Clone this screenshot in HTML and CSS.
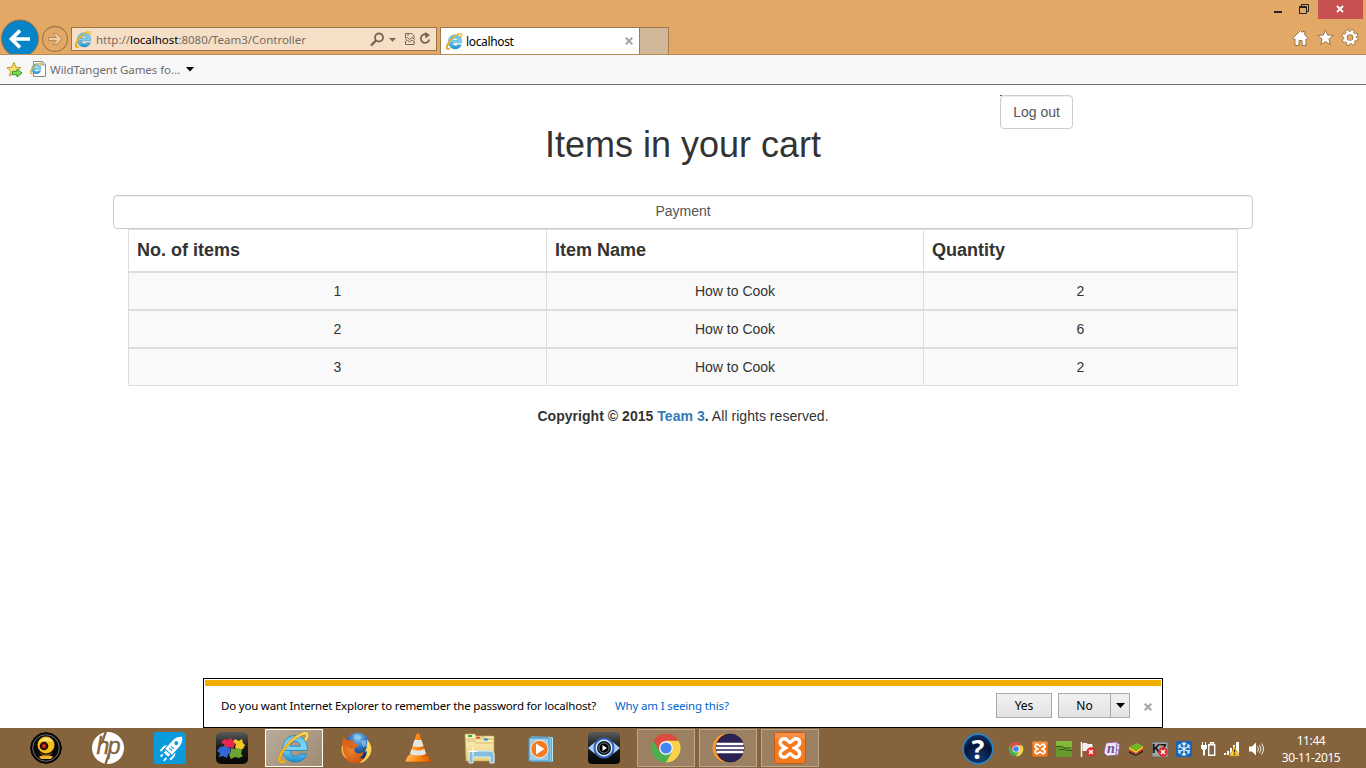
FILE: index.html
```html
<!DOCTYPE html>
<html lang="en">
<head>
<meta charset="utf-8">
<title>localhost</title>
<link rel="stylesheet" href="styles.css">
</head>
<body>
<svg class="defs" aria-hidden="true">
  <defs>
    <linearGradient id="ieBlue" x1="0" y1="0" x2="0" y2="1"><stop offset="0" stop-color="#64c8ed"/><stop offset=".5" stop-color="#7ed4f6"/><stop offset="1" stop-color="#168bcf"/></linearGradient>
    <linearGradient id="ieGold" x1="0" y1="0" x2="1" y2="0"><stop offset="0" stop-color="#f2b51c"/><stop offset="1" stop-color="#ffe06a"/></linearGradient>
    <linearGradient id="folder" x1="0" y1="0" x2="0" y2="1"><stop offset="0" stop-color="#fdf3bf"/><stop offset="1" stop-color="#e9cf7c"/></linearGradient>
    <linearGradient id="dark" x1="0" y1="0" x2="0" y2="1"><stop offset="0" stop-color="#5b5b5b"/><stop offset=".45" stop-color="#1c1c1c"/><stop offset="1" stop-color="#050505"/></linearGradient>
    <radialGradient id="help" cx=".5" cy=".8" r=".7"><stop offset="0" stop-color="#123a76"/><stop offset=".7" stop-color="#061437"/><stop offset="1" stop-color="#0a2b60"/></radialGradient>
    <radialGradient id="globe" cx=".5" cy=".2" r=".8"><stop offset="0" stop-color="#7fc4ef"/><stop offset=".5" stop-color="#2c6db5"/><stop offset="1" stop-color="#122a5c"/></radialGradient>
    <radialGradient id="fox" cx=".35" cy=".55" r=".7"><stop offset="0" stop-color="#ef8428"/><stop offset=".6" stop-color="#d25a17"/><stop offset="1" stop-color="#96300c"/></radialGradient>
    <linearGradient id="cone" x1="0" y1="0" x2="1" y2="0"><stop offset="0" stop-color="#ffb35a"/><stop offset=".5" stop-color="#ff8a10"/><stop offset="1" stop-color="#d65a00"/></linearGradient>
    <symbol id="ie" viewBox="0 0 32 32">
      <path d="M5 18.500H29.300C30.200 9.500 24.300 3.500 17.200 3.500S4.500 9 4.500 17s5.700 13 13 13c5.500 0 9.700-3 11.300-8H21.500c-1 1.600-2.200 2.200-4 2.200-3 0-5-2.200-5.200-5.700M12.300 14.200c.4-3 2.300-4.800 5-4.800s4.600 1.800 4.900 4.800Z" fill="url(#ieBlue)" stroke="#1680bd" stroke-width=".8" fill-rule="evenodd"/>
      <path d="M27.300 8.500C30.800 2.300 29.600-.3 24 2 16 5.300 7 13.500 3 22c-3 6.400-1.600 9.500 4 7.300" fill="none" stroke="#c68a12" stroke-width="3"/>
      <path d="M27.300 8.500C30.800 2.300 29.600-.3 24 2 16 5.300 7 13.500 3 22c-3 6.400-1.600 9.500 4 7.300" fill="none" stroke="url(#ieGold)" stroke-width="2.200"/>
    </symbol>
    <symbol id="chrome" viewBox="0 0 32 32">
      <circle cx="16" cy="16" r="14.500" fill="#4caf50"/>
      <path d="M3.440 8.750A14.500 14.500 0 0 1 28.560 8.750H16L9.700 19.600Z" fill="#dd4b3e"/>
      <path d="M28.560 8.750A14.500 14.500 0 0 1 16 30.500L22.300 19.600 16 8.750Z" fill="#fdd04a"/>
      <circle cx="16" cy="16" r="7" fill="#f4f4f4"/><circle cx="16" cy="16" r="5.600" fill="#4285f0"/>
    </symbol>
    <symbol id="xampp" viewBox="0 0 32 32">
      <rect x=".5" y=".5" width="31" height="31" rx="3" fill="#f47a20" stroke="#c65a12"/>
      <path d="M1 1h30v6H1Z" fill="#f8a36a" opacity=".5"/>
      <path d="m10 10.500 12 11m0-11-12 11" stroke="#fff" stroke-width="11" stroke-linecap="round"/>
      <path d="m10 10.500 3.500 2.500q2.500 2 5 0l3.500-2.500M10 21.500l3.500-2.500q2.500-2 5 0l3.500 2.500M16 14v4" fill="none" stroke="#f47a20" stroke-width="4" stroke-linecap="round"/>
    </symbol>
    <symbol id="error" viewBox="0 0 10 10"><circle cx="5" cy="5" r="4.700" fill="#e02c2c"/><path d="m3 3 4 4m0-4-4 4" stroke="#fff" stroke-width="1.500"/></symbol>
  </defs>
</svg>

<div class="desktop">
  <header class="chrome">
    <div class="caption">
      <span class="cap-btn"><svg width="9" height="19"><path d="M0 11h8v2H0Z" fill="#222"/></svg></span>
      <span class="cap-btn restore"><svg width="12" height="19"><path d="M1.500 6.500h7v7h-7ZM1 7.500h8M3.500 6V4.500h7v7H9" fill="none" stroke="#222"/></svg></span>
      <span class="cap-close"><svg width="9" height="9"><path d="m1 1 6 6m0-6-6 6" stroke="#fff" stroke-width="1.800"/></svg></span>
    </div>
    <div class="navbar">
      <svg class="history" width="71" height="35" viewBox="0 19 71 35">
        <circle cx="20" cy="38.500" r="18.500" fill="#0684c8" stroke="#9a6d3c"/>
        <path d="M30 39H12m8-8.500L11.500 39l8.500 8.500" fill="none" stroke="#fff" stroke-width="3.700"/>
        <circle cx="55" cy="39" r="12.500" fill="none" stroke="#a87c49" stroke-width="1.300"/>
        <path d="M48.500 37.500h8l-3.500-4h3.200l5.600 5.500-5.600 5.500H53l3.500-4h-8Z" fill="#f0cfa5" stroke="#a87c49" stroke-width=".8"/>
      </svg>
      <div class="address">
        <svg width="17" height="17"><use href="#ie"/></svg>
        <span class="url">http://<b>localhost</b>:8080/Team3/Controller</span>
        <svg class="addr-tools" width="64" height="18" viewBox="0 0 64 18">
          <circle cx="9" cy="7.500" r="4" fill="none" stroke="#77664f" stroke-width="1.800"/><path d="m6 10.500-5 5" stroke="#77664f" stroke-width="2.400"/>
          <path d="M19 8h7l-3.500 3.800Z" fill="#77664f"/>
          <path d="M35.500 8V3.500h6l2.500 2V8M35.500 12v2.500H44V12" fill="none" stroke="#77664f"/><path d="m35 9.500 2.500-2 2 2 2.500-2 3 2M35 12l2.500-2 2 2 2.500-2 3 2M37 5h2" fill="none" stroke="#77664f"/>
          <path d="M57.500 5a4.300 4.300 0 1 0 1.800 4.500" fill="none" stroke="#77664f" stroke-width="1.800"/><path d="m55 2 5 3-4.500 3.500Z" fill="#77664f"/>
        </svg>
      </div>
      <div class="tab">
        <svg width="17" height="17"><use href="#ie"/></svg>
        <span class="tab-name">localhost</span>
        <svg width="8" height="8"><path d="m.7.700 6.600 6.600m0-6.600L.7 7.300" stroke="#a5a5a5" stroke-width="2"/></svg>
      </div>
      <div class="new-tab"></div>
      <svg class="tools" width="68" height="20" viewBox="0 0 68 20">
        <g fill="#fff" stroke="#9b744a" stroke-width="1">
          <path d="M.5 10.500 8.500 2.500l2 2V3.500h2.300V7l3.700 3.500-1.500 1-1-.7V17.500h-4V12.500H7v5H3v-6.700l-1 .7Z"/>
          <path d="m33.500 1.800 2.100 5.200 5.900.4-4.600 3.700 1.500 5.600-4.900-3.100-4.900 3.100 1.500-5.600-4.600-3.700 5.900-.4Z"/>
        </g>
        <circle cx="58" cy="9.500" r="6.200" fill="none" stroke="#9b744a" stroke-width="4.500" stroke-dasharray="2.900 1.970"/>
        <circle cx="58" cy="9.500" r="4.600" fill="none" stroke="#9b744a" stroke-width="4.200"/>
        <circle cx="58" cy="9.500" r="6.200" fill="none" stroke="#fff" stroke-width="2.800" stroke-dasharray="2.200 2.670" stroke-dashoffset="-.35"/>
        <circle cx="58" cy="9.500" r="4.600" fill="none" stroke="#fff" stroke-width="2.600"/>
      </svg>
    </div>
    <div class="favorites">
      <svg width="18" height="18" viewBox="0 0 18 18"><path d="m8 1.500 1.900 4.700 5.100.4-3.800 3.300 1 5L8 12.300 3.500 15l1.100-5L.8 6.600l5.200-.4Z" fill="#fbe06e" stroke="#c5952b"/><path d="M6.500 10.300H11V8l5 4-5 4v-2.300H6.500Z" fill="#79d957" stroke="#2f9a35"/></svg>
      <svg class="fav-page" width="17" height="17" viewBox="0 0 17 17"><path d="M3.500.5h9l3 3v12h-12ZM12 1v3h3.500" fill="#fff" stroke="#8a8a8a"/><svg x="0" y="1.500" width="12" height="12"><use href="#ie"/></svg></svg>
      <span class="fav-name">WildTangent Games fo...</span>
      <svg width="8" height="5"><path d="M0 0h8L4 4.500Z" fill="#000"/></svg>
    </div>
  </header>

  <main class="page">
    <div class="top"><button class="btn logout">Log out</button></div>
    <h1 class="title">Items in your cart</h1>
    <button class="btn payment">Payment</button>
    <div class="cart">
      <div class="row head"><span>No. of items</span><span>Item Name</span><span>Quantity</span></div>
      <div class="row"><span>1</span><span>How to Cook</span><span>2</span></div>
      <div class="row"><span>2</span><span>How to Cook</span><span>6</span></div>
      <div class="row"><span>3</span><span>How to Cook</span><span>2</span></div>
    </div>
    <p class="copyright"><b>Copyright © 2015 <a>Team 3</a>.</b> All rights reserved.</p>
    <div class="notice">
      <div class="stripe"></div>
      <div class="notice-body">
        <span class="question">Do you want Internet Explorer to remember the password for localhost?</span>
        <a class="why">Why am I seeing this?</a>
        <span class="choice yes">Yes</span>
        <span class="choice no"><span class="no-label">No</span><span class="drop"><svg width="9" height="5"><path d="M0 0h9L4.500 5Z"/></svg></span></span>
        <svg class="dismiss" width="8" height="8"><path d="m.7.700 6.600 6.600m0-6.600L.7 7.300" stroke="#a5a5a5" stroke-width="2"/></svg>
      </div>
    </div>
  </main>

  <footer class="taskbar">
    <div class="apps">
      <span class="app"><svg viewBox="0 0 32 32"><circle cx="16" cy="16" r="15.300" fill="#090909" stroke="#000"/><circle cx="16" cy="16" r="13.300" fill="none" stroke="#888" stroke-width=".8"/><path d="M9 24.500q7-3 14 0l-2 2.500H11Z" fill="#f1b52a"/><circle cx="16" cy="13" r="8.500" fill="#f6bd1d"/><path d="M9 10q7-8 14 0-7-3-14 0" fill="#ffe98a"/><circle cx="14" cy="14" r="4.300" fill="#2a1010"/><circle cx="14" cy="14" r="2" fill="#e42a16"/><path d="M10 21q6 4 12 0" fill="none" stroke="#7a4a08" stroke-width="1.500"/></svg></span>
      <span class="app"><svg viewBox="0 0 32 32"><circle cx="16" cy="16" r="16" fill="#fff"/><path d="M13.800 0 9.800 11M17 22 13.500 32" stroke="#84633d" stroke-width="2.300"/><text x="4.500" y="22" class="hp">hp</text></svg></span>
      <span class="app"><svg viewBox="0 0 32 32"><path d="M0 0h29l3 3v29H0Z" fill="#0b9bdd"/><g transform="translate(2 0) rotate(42 16 16)" fill="#fff"><path d="M16 1c-3.500 3-4.500 6-4.500 9v11h9V10c0-3-1-6-4.500-9Z"/><path d="M10.500 17 8.500 20v6h2v-3M21.500 17l2 3v6h-2v-3M13 22h6v3h-6ZM12.500 27h1.800v3h-1.800ZM17.500 27h1.800v4h-1.800Z"/><circle cx="16" cy="9.500" r="2" fill="#0b9bdd"/><path d="M14 15.500h4M14 18h4" stroke="#0b9bdd" stroke-width="1.100"/></g></svg></span>
      <span class="app"><svg viewBox="0 0 32 32"><rect width="32" height="32" rx="5" fill="url(#dark)"/><path d="M8 7l4 1 2-2 3 2 2 4-2 4-5-1-3 1-1-4-3-1Z" fill="#e62851"/><path d="m19 7 4 2 3-2 1 4 2 2-2 4-4 1-4-2 1-4-3-2Z" fill="#f3c525"/><path d="m4 15 4-1 3 1 3 1 1 5-3 1-1 4-4-2-4 1 1-4-3-2Z" fill="#3367d2"/><path d="m15 16 4 1 3-1 4 2-1 4 2 2-4 2-4-1-4 2-2-4 2-3Z" fill="#6ba62f"/></svg></span>
      <span class="app active"><svg viewBox="0 0 32 32"><use href="#ie"/></svg></span>
      <span class="app"><svg viewBox="0 0 32 32"><circle cx="16" cy="16.500" r="15" fill="url(#fox)"/><path d="M6 8Q10 .5 18 .8q10 .5 12 12 0 8-4 12-3 3-6 1 4-3 3-6-3 3-7 1-3-2-1-5l4-2q-3-3-6-3Q9 8 6 8Z" fill="url(#globe)"/><path d="M14 3q5-1 8 2l-3 3-5-1ZM21 9l5-1 1 6-4 1Z" fill="#9fd4ef" opacity=".6"/><path d="M27 7q7 8 3 16-4 7-11 8 8-5 8-12l-2 1q3-6 2-13Z" fill="#ffd85a"/><path d="M3 14q-1 8 5 13-8-4-6-13" fill="#ffbc42"/><path d="m2 12 1-7 4 4q4-2 7 0l-2 4q3 0 5 2l-5 2" fill="#d9651b"/></svg></span>
      <span class="app"><svg viewBox="0 0 32 32"><path d="M6 23h20l3 6q0 1-1 1H4q-1 0-1-1Z" fill="url(#cone)" stroke="#ae4e0d" stroke-width=".6"/><path d="M14.500 2q1.500-1.500 3 0L25 25q-9 4-18 0Z" fill="url(#cone)"/><path d="m12.500 8 7 0 2 6q-5 2-11 0ZM9.500 17q6.500 3 13 0l1.500 5q-8 3-16 0Z" fill="#e6e6e6"/></svg></span>
      <span class="app"><svg viewBox="0 0 32 32"><path d="M1 3q0-1 1-1h9l1 2h17q1 0 1 1v24H2Z" fill="url(#folder)" stroke="#c2a04d" stroke-width=".7"/><path d="M3 9h8l1 2h18M2 7h26M11 5h9l1 2h9" stroke="#cfae5a" fill="none" stroke-width=".8"/><path d="M4 3h4v2H4Z" fill="#22b14c"/><path d="M12 5h4v1.500h-4Z" fill="#d94a36"/><path d="M20 6.500h4v2h-4Z" fill="#2c94e0"/><path d="M5 31V22q0-3 3-3h18q4 0 4 3v9h-4v-6H9v6Z" fill="#87bddc" stroke="#d7f1fd"/><path d="M9 15v9M4.500 19.500h9" stroke="#fff"/></svg></span>
      <span class="app"><svg viewBox="0 0 32 32"><path d="m5 4 22 1v25H6Z" fill="#63acd0"/><path d="m22 5 2 1v23M25 5l1.500 1v23" fill="none" stroke="#b8e6f5"/><path d="M3 6h20v23H3Z" fill="#9bcee6" stroke="#4d93b9"/><circle cx="13.500" cy="17" r="8.700" fill="#f47a20" stroke="#fff" stroke-width=".8"/><path d="m10 11.500 8.500 5.500-8.500 5.500Z" fill="#fff"/></svg></span>
      <span class="app"><svg viewBox="0 0 32 32"><rect width="32" height="32" rx="4" fill="url(#dark)"/><path d="M0 16Q8 8 16 7q8 1 16 9-8 8-16 9Q8 24 0 16Z" fill="#aac9f5"/><circle cx="16" cy="16" r="10.500" fill="#2f62b5"/><circle cx="16" cy="16" r="7.700" fill="#101923" stroke="#d8edff" stroke-width="1.400"/><circle cx="16" cy="16" r="5" fill="#000" stroke="#888" stroke-width=".8"/><path d="m14.500 13 4.500 3-4.500 3Z" fill="#fff"/></svg></span>
      <span class="app open"><svg viewBox="0 0 32 32"><use href="#chrome"/></svg></span>
      <span class="app open"><svg viewBox="0 0 32 32"><circle cx="14.500" cy="16" r="14" fill="#f89a28"/><circle cx="18" cy="16" r="14" fill="#2c2255" stroke="#14122e" stroke-width=".7"/><path d="M4.500 12h27M4 16h28M4.500 20h27" stroke="#fff" stroke-width="2.300"/></svg></span>
      <span class="app open"><svg viewBox="0 0 32 32"><use href="#xampp"/></svg></span>
    </div>
    <div class="tray">
      <svg class="help" width="32" height="32"><circle cx="16" cy="16" r="14.800" fill="url(#help)" stroke="#2d84c5" stroke-width="1.700"/><text x="16" y="25.500" class="qmark">?</text></svg>
      <svg width="16" height="16"><use href="#chrome"/></svg>
      <svg width="16" height="16"><use href="#xampp"/></svg>
      <svg width="16" height="16"><rect width="16" height="16" fill="#669b2c"/><path d="M0 0h16v6H0Z" fill="#82b83c"/><path d="M0 5.500h6l2 1.500h6M3 8.500h6l1 1h6" stroke="#3a5722" stroke-width="1" fill="none"/></svg>
      <svg width="16" height="16"><path d="M1.500 1v15" stroke="#f7f7f7" stroke-width="1.500"/><path d="M3 2.500h3l2 1h4v7H8l-2-1H3Z" fill="#efefef" stroke="#fff"/><svg x="6" y="6" width="10" height="10"><use href="#error"/></svg></svg>
      <svg width="16" height="16"><path d="M2 2 13 1l3 3-2 10-11 1-3-3Z" fill="#eee4f4" stroke="#8b62a6" stroke-width=".8"/><path d="m13 1-1 13M14 5h2M13 9h2" stroke="#8b62a6"/><text x="3" y="12" class="note">n</text></svg>
      <svg width="16" height="16"><path d="m1 10 7 4 7-5v2l-7 4-7-3Z" fill="#222"/><path d="m1 8 7 4 7-5v2l-7 4-7-3Z" fill="#e53629"/><path d="m1 6 7 4 7-5v2l-7 5-7-4Z" fill="#f4ce23"/><path d="m1 6 8-4 6 3-7 5Z" fill="#72b525"/></svg>
      <svg width="16" height="16"><rect y="1" width="16" height="15" fill="#a5a5a5" stroke="#666"/><text x="0" y="12" class="k7">K7</text><svg x="6" y="6" width="10" height="10"><use href="#error"/></svg></svg>
      <svg width="16" height="16"><rect width="16" height="16" fill="#1666ba"/><path d="M8 1v14M2 4.500l12 7M2 11.500l12-7M6 2l2 2 2-2M6 14l2-2 2 2M2 7l2-1V3M14 7l-2-1V3M2 9l2 1v3M14 9l-2 1v3" fill="none" stroke="#e3f5ff" stroke-width="1.200"/></svg>
      <svg width="16" height="16"><path d="M2.500 1v3m3-3v3" stroke="#fff"/><path d="M1 4h6v3.500L5 9v5.500H3V9L1 7.500Z" fill="#fff"/><path d="M10.500 3V1.800h3V3M8.700 3.700h6v10.600h-6Z" fill="none" stroke="#fff" stroke-width="1.400"/></svg>
      <svg width="16" height="16"><path d="M0 14v-2h2v2ZM3 14v-4h2v4ZM6 14V7h2v7ZM9 14V4h2v10ZM12 14V1h3v13Z" fill="#fff"/><path d="m10.500 5.500 5 9.500h-10Z" fill="#ffc928" stroke="#b8860b" stroke-width=".6"/><path d="M10.500 8.500v3m0 1v1.500" stroke="#222" stroke-width="1.200"/></svg>
      <svg width="16" height="16"><path d="M1 5.500h3l4-4v13l-4-4H1Z" fill="#fff"/><path d="M9.500 5.500q2 2.500 0 5M11.500 4q3 4 0 8M13.500 2.500q4 5.500 0 11" fill="none" stroke="#fff" stroke-width=".9"/></svg>
    </div>
    <div class="clock"><span>11:44</span><span>30-11-2015</span></div>
  </footer>
</div>
</body>
</html>
```

FILE: styles.css
```css
* { box-sizing: border-box; }
body { margin: 0; overflow: hidden; font-family: "Noto Sans", "Open Sans", sans-serif; }
svg { display: block; flex: none; }
.defs { position: absolute; width: 0; height: 0; }
.desktop { width: 1366px; height: 768px; display: flex; flex-direction: column; background: #fff; }

.chrome { background: #e2a966; flex: none; }
.caption { height: 19px; display: flex; justify-content: flex-end; padding-right: 3px; }
.cap-btn { margin-right: 15px; }
.cap-btn.restore { margin-right: 8px; }
.cap-close { width: 45px; height: 19px; background: #c75050; display: flex; align-items: center; justify-content: center; }
.navbar { height: 36px; display: flex; border-bottom: 1px solid #bb8c54; }
.address { width: 366px; height: 24px; margin-top: 8px; border: 1px solid #9c7446; background: #f5dfc7; display: flex; align-items: center; padding: 0 2px 0 3px; }
.url { font-size: 11.5px; letter-spacing: -.02px; color: #766b60; margin-left: 4px; white-space: nowrap; }
.url b { font-weight: 400; color: #000; }
.addr-tools { margin-left: auto; }
.tab { width: 200px; height: 27px; margin: 8px 0 0 3px; border: 1px solid #a37b4b; border-bottom: 0; background: #fff; display: flex; align-items: center; padding: 0 6px 0 5px; }
.tab-name { font-size: 12px; letter-spacing: -.35px; margin-left: 3px; flex: 1; padding-top: 1px; }
.new-tab { width: 29px; height: 27px; margin-top: 8px; border: 1px solid #a37b4b; border-width: 1px 1px 0 0; background: #d0b899; }
.tools { margin: 9px 6px 0 auto; }
.favorites { height: 30px; background: #f7f7f7; border-bottom: 1px solid #707070; display: flex; align-items: center; padding-left: 6px; }
.fav-page { margin-left: 6px; }
.fav-name { font-size: 11.5px; letter-spacing: -.05px; color: #6d6d6d; margin: 0 6px 0 3px; white-space: nowrap; }

.page { flex: 1; display: flex; flex-direction: column; align-items: center; padding-top: 10px; font: 14px/20px "Liberation Sans", Arial, sans-serif; color: #333; }
.btn { height: 34px; border: 1px solid #ccc; border-radius: 4px; background: #fff; color: #555; font: 14px/20px "Liberation Sans", Arial, sans-serif; box-shadow: inset 0 1px 1px rgba(0,0,0,.075); padding: 0; text-align: center; }
.top { width: 100%; height: 34px; padding-left: 1000px; background: linear-gradient(#555, #555) 1000px 0 / 2px 1px no-repeat; }
.logout { width: 73px; }
.title { font-size: 36px; line-height: 40px; font-weight: 400; margin: -4px 0 30px; }
.payment { width: 1140px; flex: none; padding-bottom: 2px; }
.cart { width: 1110px; border: 1px solid #ddd; border-width: 1px 0 0 1px; }
.row { display: grid; grid-template-columns: 418px 377px 314px; height: 38px; background: #f9f9f9; border-bottom: 2px solid #ddd; text-align: center; }
.row span { border-right: 1px solid #ddd; padding: 8px; }
.row:last-child { height: 37px; border-bottom-width: 1px; }
.row.head { height: 43px; background: #fff; text-align: left; font-weight: 700; font-size: 18px; }
.row.head span { padding-top: 10px; }
.copyright { margin: 20px 0 0; letter-spacing: .04px; }
.copyright a { color: #337ab7; }

.notice { width: 960px; height: 50px; margin-top: auto; border: 1px solid #000; background: #fff; padding: 1px 1px 0; font: 12px/16px "Noto Sans", "Open Sans", sans-serif; color: #000; }
.stripe { height: 6px; background: #f0ae00; }
.notice-body { display: flex; align-items: center; height: 39px; padding-left: 16px; white-space: nowrap; }
.question { width: 394px; font-size: 11.5px; letter-spacing: -.2px; }
.why { color: #06c; font-size: 11.5px; letter-spacing: -.16px; }
.choice { height: 25px; border: 1px solid #aaa; background: linear-gradient(#f1f1f1, #e3e3e3); display: flex; align-items: center; justify-content: center; }
.yes { width: 56px; margin-left: auto; }
.no { width: 72px; margin-left: 6px; }
.no-label { flex: 1; text-align: center; }
.drop { width: 19px; height: 23px; border-left: 1px solid #aaa; display: flex; align-items: center; justify-content: center; }
.dismiss { margin: 3px 9px 0 14px; }

.taskbar { height: 40px; flex: none; background: #84633d; display: flex; padding-left: 16px; }
.apps { display: flex; gap: 2px; }
.app { width: 60px; height: 40px; display: flex; align-items: center; justify-content: center; }
.app svg { width: 32px; height: 32px; overflow: visible; }
.app.active, .app.open { width: 58px; height: 38px; margin: 1px; border: 1px solid #bca88e; background: #9b8162; }
.app.active { border-color: #fff; background: linear-gradient(135deg, #b8aa9a, #a08b73); }
.hp { font: italic 23px "Liberation Sans", sans-serif; fill: #84633d; stroke: #84633d; stroke-width: .4px; letter-spacing: -1.5px; }
.tray { margin-left: auto; display: flex; align-items: center; gap: 8px; padding-top: 2px; }
.tray svg { overflow: visible; }
.help { margin-right: 6px; }
.qmark { font: bold 27px "Open Sans", sans-serif; fill: #fff; text-anchor: middle; }
.note { font: italic bold 14px "Liberation Serif", serif; fill: #734b94; }
.k7 { font: bold 12px "Liberation Sans", sans-serif; fill: #111; letter-spacing: -1px; }
.clock { width: 102px; padding: 4px 8px 0 0; color: #fff; font-size: 12px; line-height: 17px; letter-spacing: -.4px; display: flex; flex-direction: column; align-items: center; }
```
